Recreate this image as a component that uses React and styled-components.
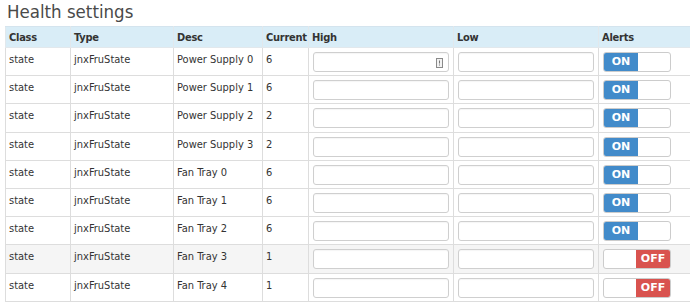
import React from "react";
import styled, { createGlobalStyle } from "styled-components";

const Global = createGlobalStyle`
  html, body { margin: 0; padding: 0; overflow: hidden; background: #fff; }
  body { font-family: "DejaVu Sans Condensed", "DejaVu Sans", sans-serif; color: #333; }
`;

const Page = styled.div`
  padding: 0 0 0 5px;
  width: 685px;
  overflow: hidden;
`;

const Title = styled.h3`
  margin: 0;
  padding: 1px 0 0 2px;
  height: 25px;
  font-size: 18.5px;
  font-weight: normal;
  color: #4a4a4a;
  line-height: 22px;
`;

const Table = styled.table`
  border-collapse: collapse;
  table-layout: fixed;
  width: 720px;
  font-size: 11px;
`;

const Th = styled.th`
  background: #d9edf7;
  text-align: left;
  font-weight: bold;
  padding: 0 3px;
  height: 20px;
  border: 1px solid #e2e8ec;
  border-top: 1px solid #d4e4ee;
  color: #333;
  letter-spacing: -0.25px;
`;

const Tr = styled.tr`
  background: ${(p) => (p.$shade ? "#f5f5f5" : "#fff")};
`;

const Td = styled.td`
  border: 1px solid #dddddd;
  padding: 4px 4px 3.2px;
  vertical-align: top;
  line-height: 14px;
`;

const TextCell = styled(Td)`
  padding-left: 3px;
  padding-top: 5px;
`;

const InputWrap = styled.div`
  position: relative;
  height: 20px;
  border: 1px solid #cfcfcf;
  border-radius: 3px;
  background: #fff;
  box-sizing: border-box;
  box-shadow: inset 0 1px 1px rgba(0,0,0,0.04);
`;

const FieldIcon = styled.svg`
  position: absolute;
  right: 5px;
  top: 5px;
`;

const Switch = styled.div`
  display: flex;
  width: 68px;
  height: 20px;
  box-sizing: border-box;
  border: 1px solid #cccccc;
  border-radius: 3px;
  overflow: hidden;
  background: #fff;
  justify-content: ${(p) => (p.$on ? "flex-start" : "flex-end")};
`;

const SwitchLabel = styled.div`
  width: 34px;
  height: 100%;
  display: flex;
  align-items: center;
  justify-content: center;
  background: ${(p) => (p.$on ? "#428bca" : "#d9534f")};
  color: #fff;
  font-weight: bold;
  font-size: 11px;
  font-family: "DejaVu Sans", sans-serif;
`;

const rows = [
  ["Power Supply 0", 6, true],
  ["Power Supply 1", 6, true],
  ["Power Supply 2", 2, true],
  ["Power Supply 3", 2, true],
  ["Fan Tray 0", 6, true],
  ["Fan Tray 1", 6, true],
  ["Fan Tray 2", 6, true],
  ["Fan Tray 3", 1, false],
  ["Fan Tray 4", 1, false],
];

const widths = [65, 103, 89, 46, 145, 145, 127];

export default function App() {
  return (
    <Page>
      <Global />
      <Title>Health settings</Title>
      <Table>
        <colgroup>
          {widths.map((w, i) => (
            <col key={i} style={{ width: w }} />
          ))}
        </colgroup>
        <thead>
          <tr>
            <Th>Class</Th>
            <Th>Type</Th>
            <Th>Desc</Th>
            <Th>Current</Th>
            <Th>High</Th>
            <Th>Low</Th>
            <Th>Alerts</Th>
          </tr>
        </thead>
        <tbody>
          {rows.map(([desc, cur, on], i) => (
            <Tr key={i} $shade={i === 7}>
              <TextCell>state</TextCell>
              <TextCell>jnxFruState</TextCell>
              <TextCell>{desc}</TextCell>
              <TextCell>{cur}</TextCell>
              <Td>
                <InputWrap>
                  {i === 0 && (
                    <FieldIcon width="7" height="10" viewBox="0 0 7 10">
                      <rect x="0.5" y="0.5" width="6" height="9" fill="#f2f2f2" stroke="#8a8a8a" />
                      <rect x="3" y="2.5" width="1" height="3" fill="#777" />
                      <rect x="3" y="6.5" width="1" height="1" fill="#777" />
                    </FieldIcon>
                  )}
                </InputWrap>
              </Td>
              <Td>
                <InputWrap />
              </Td>
              <Td>
                <Switch $on={on}>
                  <SwitchLabel $on={on}>{on ? "ON" : "OFF"}</SwitchLabel>
                </Switch>
              </Td>
            </Tr>
          ))}
        </tbody>
      </Table>
    </Page>
  );
}
